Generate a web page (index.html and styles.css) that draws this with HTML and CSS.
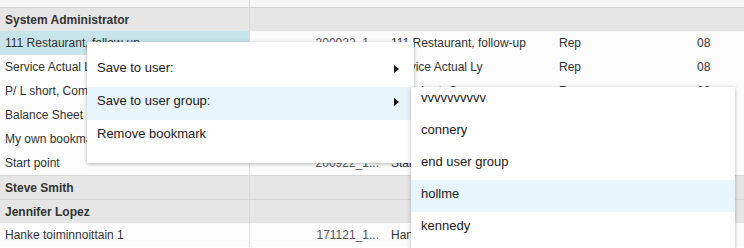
FILE: index.html
```html
<!DOCTYPE html>
<html lang="en">
<head>
    <meta charset="UTF-8">
    <title>Bookmarks</title>
    <link rel="stylesheet" href="styles.css">
</head>
<body>
    <div class="grid">
        <div class="row top-row">
            <div class="cell first"></div>
            <div class="cell"></div><div class="cell"></div><div class="cell"></div><div class="cell"></div>
        </div>

        <div class="row group-row">
            <div class="cell first">System Administrator</div>
            <div class="cell"></div><div class="cell"></div><div class="cell"></div><div class="cell"></div>
        </div>
        <div class="row">
            <div class="cell first selected">111 Restaurant, follow-up</div>
            <div class="cell num">200922_1...</div>
            <div class="cell">111 Restaurant, follow-up</div>
            <div class="cell">Rep</div>
            <div class="cell">08</div>
        </div>
        <div class="row">
            <div class="cell first">Service Actual Ly</div>
            <div class="cell num">200922_1...</div>
            <div class="cell">Service Actual Ly</div>
            <div class="cell">Rep</div>
            <div class="cell">08</div>
        </div>
        <div class="row">
            <div class="cell first">P/ L short, Compare</div>
            <div class="cell num">200922_1...</div>
            <div class="cell">P/ L short, Compare</div>
            <div class="cell">Rep</div>
            <div class="cell">08</div>
        </div>
        <div class="row">
            <div class="cell first">Balance Sheet Compare</div>
            <div class="cell num">200922_1...</div>
            <div class="cell">Balance Sheet Compare</div>
            <div class="cell">Rep</div>
            <div class="cell">08</div>
        </div>
        <div class="row">
            <div class="cell first">My own bookmark</div>
            <div class="cell num">200922_1...</div>
            <div class="cell">My own bookmark</div>
            <div class="cell">Rep</div>
            <div class="cell">08</div>
        </div>
        <div class="row">
            <div class="cell first">Start point</div>
            <div class="cell num">200922_1...</div>
            <div class="cell">Start point</div>
            <div class="cell"></div>
            <div class="cell"></div>
        </div>

        <div class="row group-row">
            <div class="cell first">Steve Smith</div>
            <div class="cell"></div><div class="cell"></div><div class="cell"></div><div class="cell"></div>
        </div>
        <div class="row group-row">
            <div class="cell first">Jennifer Lopez</div>
            <div class="cell"></div><div class="cell"></div><div class="cell"></div><div class="cell"></div>
        </div>
        <div class="row">
            <div class="cell first">Hanke toiminnoittain 1</div>
            <div class="cell num">171121_1...</div>
            <div class="cell">Hanke toiminnoittain 1</div>
            <div class="cell">Rep</div>
            <div class="cell">08</div>
        </div>
    </div>

    <!-- context menu -->
    <div class="menu main-menu">
        <div class="menu-item">Save to user:<span class="arrow"></span></div>
        <div class="menu-item active">Save to user group:<span class="arrow"></span></div>
        <div class="menu-item">Remove bookmark</div>
    </div>

    <div class="menu sub-menu">
        <div class="sub-list">
            <div class="menu-item">vvvvvvvvvv</div>
            <div class="menu-item">connery</div>
            <div class="menu-item">end user group</div>
            <div class="menu-item active">hollme</div>
            <div class="menu-item">kennedy</div>
            <div class="menu-item">mahonen</div>
        </div>
    </div>
</body>
</html>
```

FILE: styles.css
```css
html, body {
    margin: 0;
    padding: 0;
    overflow: hidden;
}
body {
    position: relative;
    width: 744px;
    height: 248px;
    font-family: "Liberation Sans", Arial, sans-serif;
    font-size: 12px;
    color: #333;
    background: #fff;
}
.grid {
    display: flex;
    flex-direction: column;
}
.row {
    display: grid;
    grid-template-columns: 250px 134px 170px 138px 1fr;
    height: 24px;
    background: #fcfcfc;
}
.cell {
    display: flex;
    align-items: center;
    padding: 0 5px;
    white-space: nowrap;
    overflow: hidden;
    box-sizing: border-box;
}
.cell.first {
    border-right: 1px solid #dedede;
}
.cell.num {
    justify-content: flex-end;
    color: #555;
}
.cell:nth-child(3) {
    padding-left: 7px;
}
.cell.selected {
    background: #c7e4ea;
}
.top-row {
    height: 7px;
    background: #f7f7f7;
}
.top-row .cell.first {
    border-right-color: #d4d4d4;
}
.group-row {
    background: #e5e5e5;
    border-top: 1px solid #d6d6d6;
    box-sizing: border-box;
    font-weight: bold;
    color: #333;
}
.group-row .cell.first {
    border-right-color: #d8d8d8;
}

.menu {
    position: absolute;
    background: #fff;
    box-shadow: 0 1px 4px rgba(0, 0, 0, 0.28);
    font-size: 13px;
    color: #1a1a1a;
}
.main-menu {
    left: 87px;
    top: 42px;
    width: 327px;
    padding: 12px 0 10px;
}
.menu-item {
    position: relative;
    height: 33px;
    display: flex;
    align-items: center;
    padding: 0 10px 6px;
    box-sizing: border-box;
}
.menu-item.active {
    background: #e8f5fc;
}
.arrow {
    position: absolute;
    right: 15px;
    top: 11px;
    width: 0;
    height: 0;
    border-left: 5px solid #111;
    border-top: 4px solid transparent;
    border-bottom: 4px solid transparent;
}
.sub-menu {
    left: 411px;
    top: 87px;
    width: 324px;
    height: 190px;
    overflow: hidden;
}
.sub-list {
    margin-top: -3px;
}
.sub-menu .menu-item {
    height: 32px;
}
```
